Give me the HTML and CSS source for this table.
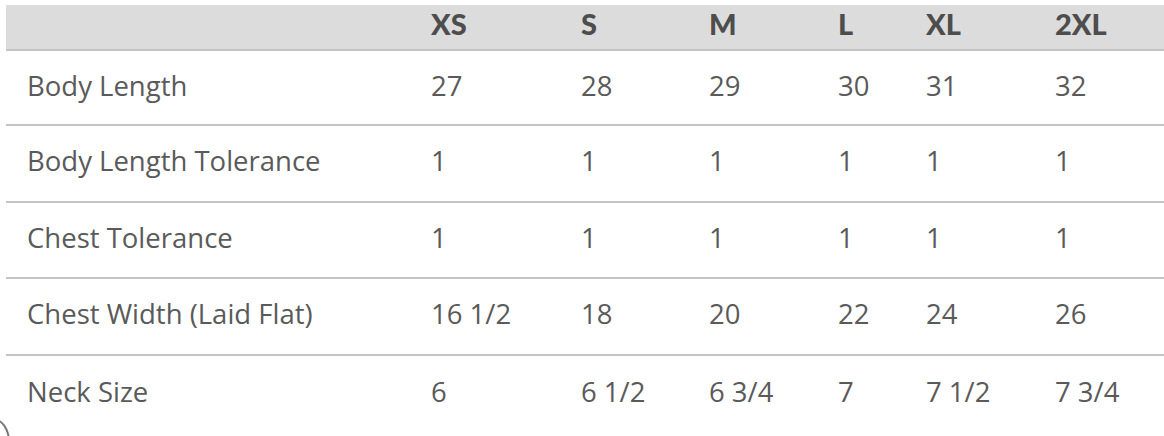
FILE: index.html
```html
<!DOCTYPE html>
<html>
<head>
<meta charset="utf-8">
<link rel="stylesheet" href="styles.css">
</head>
<body>
<div class="wrap">
  <table class="size-table">
    <colgroup>
      <col class="c-label">
      <col class="c-xs">
      <col class="c-s">
      <col class="c-m">
      <col class="c-l">
      <col class="c-xl">
      <col class="c-2xl">
    </colgroup>
    <thead>
      <tr>
        <th></th><th>XS</th><th>S</th><th>M</th><th>L</th><th>XL</th><th>2XL</th>
      </tr>
    </thead>
    <tbody>
      <tr><td>Body Length</td><td>27</td><td>28</td><td>29</td><td>30</td><td>31</td><td>32</td></tr>
      <tr><td>Body Length Tolerance</td><td>1</td><td>1</td><td>1</td><td>1</td><td>1</td><td>1</td></tr>
      <tr><td>Chest Tolerance</td><td>1</td><td>1</td><td>1</td><td>1</td><td>1</td><td>1</td></tr>
      <tr><td>Chest Width (Laid Flat)</td><td>16 1/2</td><td>18</td><td>20</td><td>22</td><td>24</td><td>26</td></tr>
      <tr><td>Neck Size</td><td>6</td><td>6 1/2</td><td>6 3/4</td><td>7</td><td>7 1/2</td><td>7 3/4</td></tr>
    </tbody>
  </table>
  <div class="corner"></div>
</div>
</body>
</html>
```

FILE: styles.css
```css
html, body {
  margin: 0;
  padding: 0;
  background: #ffffff;
}
body {
  font-family: "Open Sans", Lato, sans-serif;
  color: #555555;
}
.wrap {
  position: relative;
  width: 1164px;
  height: 436px;
  overflow: hidden;
  padding: 5px 0 0 6px;
  box-sizing: border-box;
}
.size-table {
  border-collapse: collapse;
  table-layout: fixed;
  width: 1158px;
}
.c-label { width: 404px; }
.c-xs { width: 150px; }
.c-s { width: 128px; }
.c-m { width: 129px; }
.c-l { width: 88px; }
.c-xl { width: 129px; }
.c-2xl { width: 130px; }

.size-table th {
  background: #dcdcdc;
  height: 45px;
  padding: 0 0 7px 21px;
  text-align: left;
  font-family: Lato, "Open Sans", sans-serif;
  font-weight: 900;
  font-size: 29px;
  line-height: 1;
  color: #4d4d4d;
  border-bottom: 2px solid #c4c4c4;
  box-sizing: border-box;
  vertical-align: middle;
}
.size-table td {
  height: 76.6px;
  padding: 0 0 5px 21px;
  text-align: left;
  font-size: 27.5px;
  line-height: 1.2;
  font-weight: 400;
  color: #5a5a5a;
  border-bottom: 2px solid #c4c4c4;
  box-sizing: border-box;
  vertical-align: middle;
  white-space: nowrap;
}
.size-table tbody tr:first-child td {
  height: 75px;
}
.size-table tbody tr:last-child td {
  border-bottom: none;
}
.corner {
  position: absolute;
  left: -24px;
  bottom: -30px;
  width: 30px;
  height: 44px;
  border: 2px solid #777;
  border-radius: 50%;
}
```
